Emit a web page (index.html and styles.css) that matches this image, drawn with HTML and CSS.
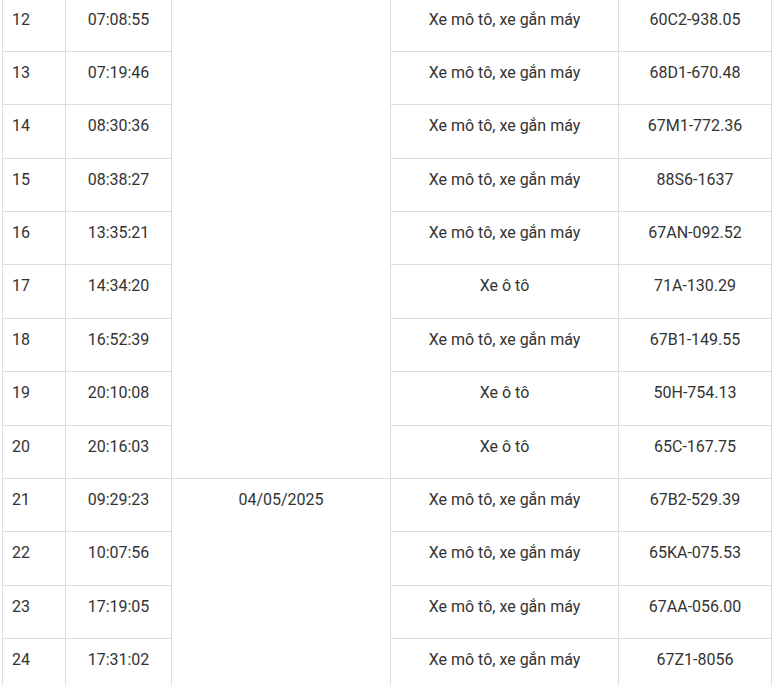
FILE: index.html
```html
<!DOCTYPE html>
<html lang="vi">
<head>
<meta charset="utf-8">
<title>Danh sách phương tiện</title>
<link rel="stylesheet" href="styles.css">
</head>
<body>
<div class="wrap">
<table class="list">
  <tbody>
    <tr>
      <td class="c-no">12</td>
      <td class="c-time">07:08:55</td>
      <td class="c-date" rowspan="9"></td>
      <td class="c-type">Xe mô tô, xe gắn máy</td>
      <td class="c-plate">60C2-938.05</td>
    </tr>
    <tr>
      <td class="c-no">13</td>
      <td class="c-time">07:19:46</td>
      <td class="c-type">Xe mô tô, xe gắn máy</td>
      <td class="c-plate">68D1-670.48</td>
    </tr>
    <tr>
      <td class="c-no">14</td>
      <td class="c-time">08:30:36</td>
      <td class="c-type">Xe mô tô, xe gắn máy</td>
      <td class="c-plate">67M1-772.36</td>
    </tr>
    <tr>
      <td class="c-no">15</td>
      <td class="c-time">08:38:27</td>
      <td class="c-type">Xe mô tô, xe gắn máy</td>
      <td class="c-plate">88S6-1637</td>
    </tr>
    <tr>
      <td class="c-no">16</td>
      <td class="c-time">13:35:21</td>
      <td class="c-type">Xe mô tô, xe gắn máy</td>
      <td class="c-plate">67AN-092.52</td>
    </tr>
    <tr>
      <td class="c-no">17</td>
      <td class="c-time">14:34:20</td>
      <td class="c-type">Xe ô tô</td>
      <td class="c-plate">71A-130.29</td>
    </tr>
    <tr>
      <td class="c-no">18</td>
      <td class="c-time">16:52:39</td>
      <td class="c-type">Xe mô tô, xe gắn máy</td>
      <td class="c-plate">67B1-149.55</td>
    </tr>
    <tr>
      <td class="c-no">19</td>
      <td class="c-time">20:10:08</td>
      <td class="c-type">Xe ô tô</td>
      <td class="c-plate">50H-754.13</td>
    </tr>
    <tr>
      <td class="c-no">20</td>
      <td class="c-time">20:16:03</td>
      <td class="c-type">Xe ô tô</td>
      <td class="c-plate">65C-167.75</td>
    </tr>
    <tr>
      <td class="c-no">21</td>
      <td class="c-time">09:29:23</td>
      <td class="c-date" rowspan="4">04/05/2025</td>
      <td class="c-type">Xe mô tô, xe gắn máy</td>
      <td class="c-plate">67B2-529.39</td>
    </tr>
    <tr>
      <td class="c-no">22</td>
      <td class="c-time">10:07:56</td>
      <td class="c-type">Xe mô tô, xe gắn máy</td>
      <td class="c-plate">65KA-075.53</td>
    </tr>
    <tr>
      <td class="c-no">23</td>
      <td class="c-time">17:19:05</td>
      <td class="c-type">Xe mô tô, xe gắn máy</td>
      <td class="c-plate">67AA-056.00</td>
    </tr>
    <tr>
      <td class="c-no">24</td>
      <td class="c-time">17:31:02</td>
      <td class="c-type">Xe mô tô, xe gắn máy</td>
      <td class="c-plate">67Z1-8056</td>
    </tr>
  </tbody>
</table>
</div>
</body>
</html>
```

FILE: styles.css
```css
html, body {
  margin: 0;
  padding: 0;
  background: #fff;
  overflow: hidden;
  height: 685px;
}

.wrap {
  padding-left: 2px;
  margin-top: -1.36px;
}

.list {
  border-collapse: separate;
  border-spacing: 0;
  table-layout: fixed;
  width: 770px;
  border-left: 1px solid #dddddd;
  font-family: Roboto, "Liberation Sans", sans-serif;
  font-size: 16px;
  line-height: 24px;
  color: #333333;
}

.list td {
  box-sizing: border-box;
  border-right: 1px solid #dddddd;
  border-bottom: 1px solid #dddddd;
  padding: 9px 10px 19.36px;
  vertical-align: top;
  text-align: center;
  white-space: nowrap;
}

.list td.c-no {
  width: 63px;
  padding-left: 9px;
  text-align: left;
}

.list td.c-time { width: 106px; }
.list td.c-date { width: 219px; }
.list td.c-type { width: 228px; }
.list td.c-plate { width: 153px; }
```
